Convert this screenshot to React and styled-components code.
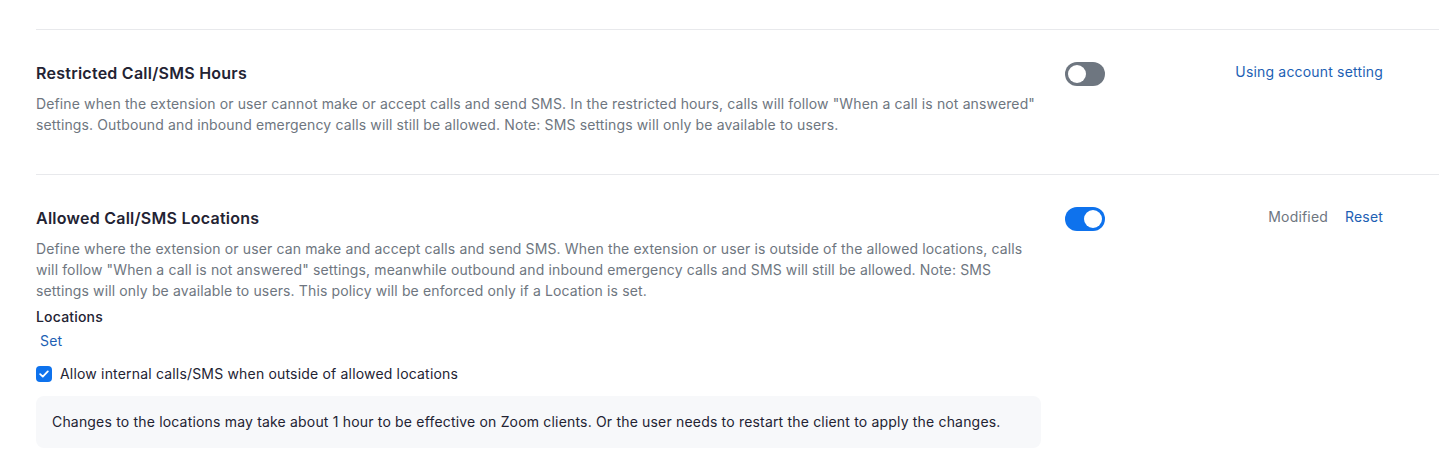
import React from "react";
import styled, { createGlobalStyle } from "styled-components";

const GlobalStyle = createGlobalStyle`
  body {
    margin: 0;
    background: #ffffff;
    font-family: Inter, "Noto Sans", "Liberation Sans", sans-serif;
    color: #232333;
    letter-spacing: 0.18px;
  }
`;

const Page = styled.div`
  padding-left: 36px;
  padding-top: 29px;
`;

const Section = styled.section`
  display: flex;
  border-top: 1px solid #e8e9ec;
  padding: 31px 56px 39px 0;
`;

const Main = styled.div`
  width: 1010px;
  flex: none;
`;

const Title = styled.h3`
  margin: 0;
  font-size: 16px;
  line-height: 24px;
  font-weight: 600;
  letter-spacing: 0.25px;
  color: #232333;
`;

const Desc = styled.p`
  margin: 8px 0 0;
  font-size: 14px;
  line-height: 21px;
  letter-spacing: 0.13px;
  color: #6e7680;
`;

const Side = styled.div`
  flex: 1;
  display: flex;
  align-items: flex-start;
  justify-content: space-between;
  padding-left: 19px;
`;

const Toggle = styled.span`
  position: relative;
  margin-top: 1px;
  width: 40px;
  height: 24px;
  border-radius: 12px;
  background: ${(p) => (p.$on ? "#0e72ed" : "#6e7680")};
  flex: none;
  &::after {
    content: "";
    position: absolute;
    top: 3px;
    left: ${(p) => (p.$on ? "19px" : "3px")};
    width: 18px;
    height: 18px;
    border-radius: 50%;
    background: #ffffff;
  }
`;

const Status = styled.div`
  display: flex;
  gap: 17px;
  font-size: 14px;
  line-height: 22px;
`;

const Muted = styled.span`
  color: #6e7680;
`;

const Link = styled.a`
  color: #1d5fb4;
  text-decoration: none;
  cursor: pointer;
`;

const Label = styled.div`
  margin-top: 5px;
  font-size: 14px;
  line-height: 22px;
  font-weight: 500;
  color: #232333;
`;

const SetLink = styled(Link)`
  display: block;
  margin: 2px 0 0 4px;
  font-size: 14px;
  line-height: 22px;
`;

const CheckRow = styled.label`
  display: flex;
  align-items: center;
  gap: 8px;
  margin-top: 11px;
  font-size: 14px;
  line-height: 22px;
  color: #232333;
`;

const Box = styled.span`
  width: 16px;
  height: 16px;
  border-radius: 4px;
  background: #0e72ed;
  display: flex;
  align-items: center;
  justify-content: center;
`;

const Notice = styled.div`
  margin-top: 11px;
  width: 1005px;
  box-sizing: border-box;
  padding: 15px 16px;
  background: #f7f8fa;
  border-radius: 8px;
  font-size: 14px;
  line-height: 22px;
  letter-spacing: 0.18px;
  color: #232333;
`;

function App() {
  return (
    <>
      <GlobalStyle />
      <Page>
        <Section>
          <Main>
            <Title>Restricted Call/SMS Hours</Title>
            <Desc>
              Define when the extension or user cannot make or accept calls and send SMS. In the
              restricted hours, calls will follow "When a call is not answered" settings. Outbound and
              inbound emergency calls will still be allowed. Note: SMS settings will only be available
              to users.
            </Desc>
          </Main>
          <Side>
            <Toggle />
            <Status>
              <Link>Using account setting</Link>
            </Status>
          </Side>
        </Section>
        <Section>
          <Main>
            <Title>Allowed Call/SMS Locations</Title>
            <Desc>
              Define where the extension or user can make and accept calls and send SMS. When the
              extension or user is outside of the allowed locations, calls will follow "When a call is
              not answered" settings, meanwhile outbound and inbound emergency calls and SMS will still
              be allowed. Note: SMS settings will only be available to users. This policy will be
              enforced only if a Location is set.
            </Desc>
            <Label>Locations</Label>
            <SetLink>Set</SetLink>
            <CheckRow>
              <Box>
                <svg width="10" height="8" viewBox="0 0 10 8" fill="none">
                  <path d="M1.2 4.2 3.8 6.6 8.8 1.4" stroke="#fff" strokeWidth="1.8" strokeLinecap="round" strokeLinejoin="round" />
                </svg>
              </Box>
              Allow internal calls/SMS when outside of allowed locations
            </CheckRow>
            <Notice>
              Changes to the locations may take about 1 hour to be effective on Zoom clients. Or the user
              needs to restart the client to apply the changes.
            </Notice>
          </Main>
          <Side>
            <Toggle $on />
            <Status>
              <Muted>Modified</Muted>
              <Link>Reset</Link>
            </Status>
          </Side>
        </Section>
      </Page>
    </>
  );
}

export default App;
